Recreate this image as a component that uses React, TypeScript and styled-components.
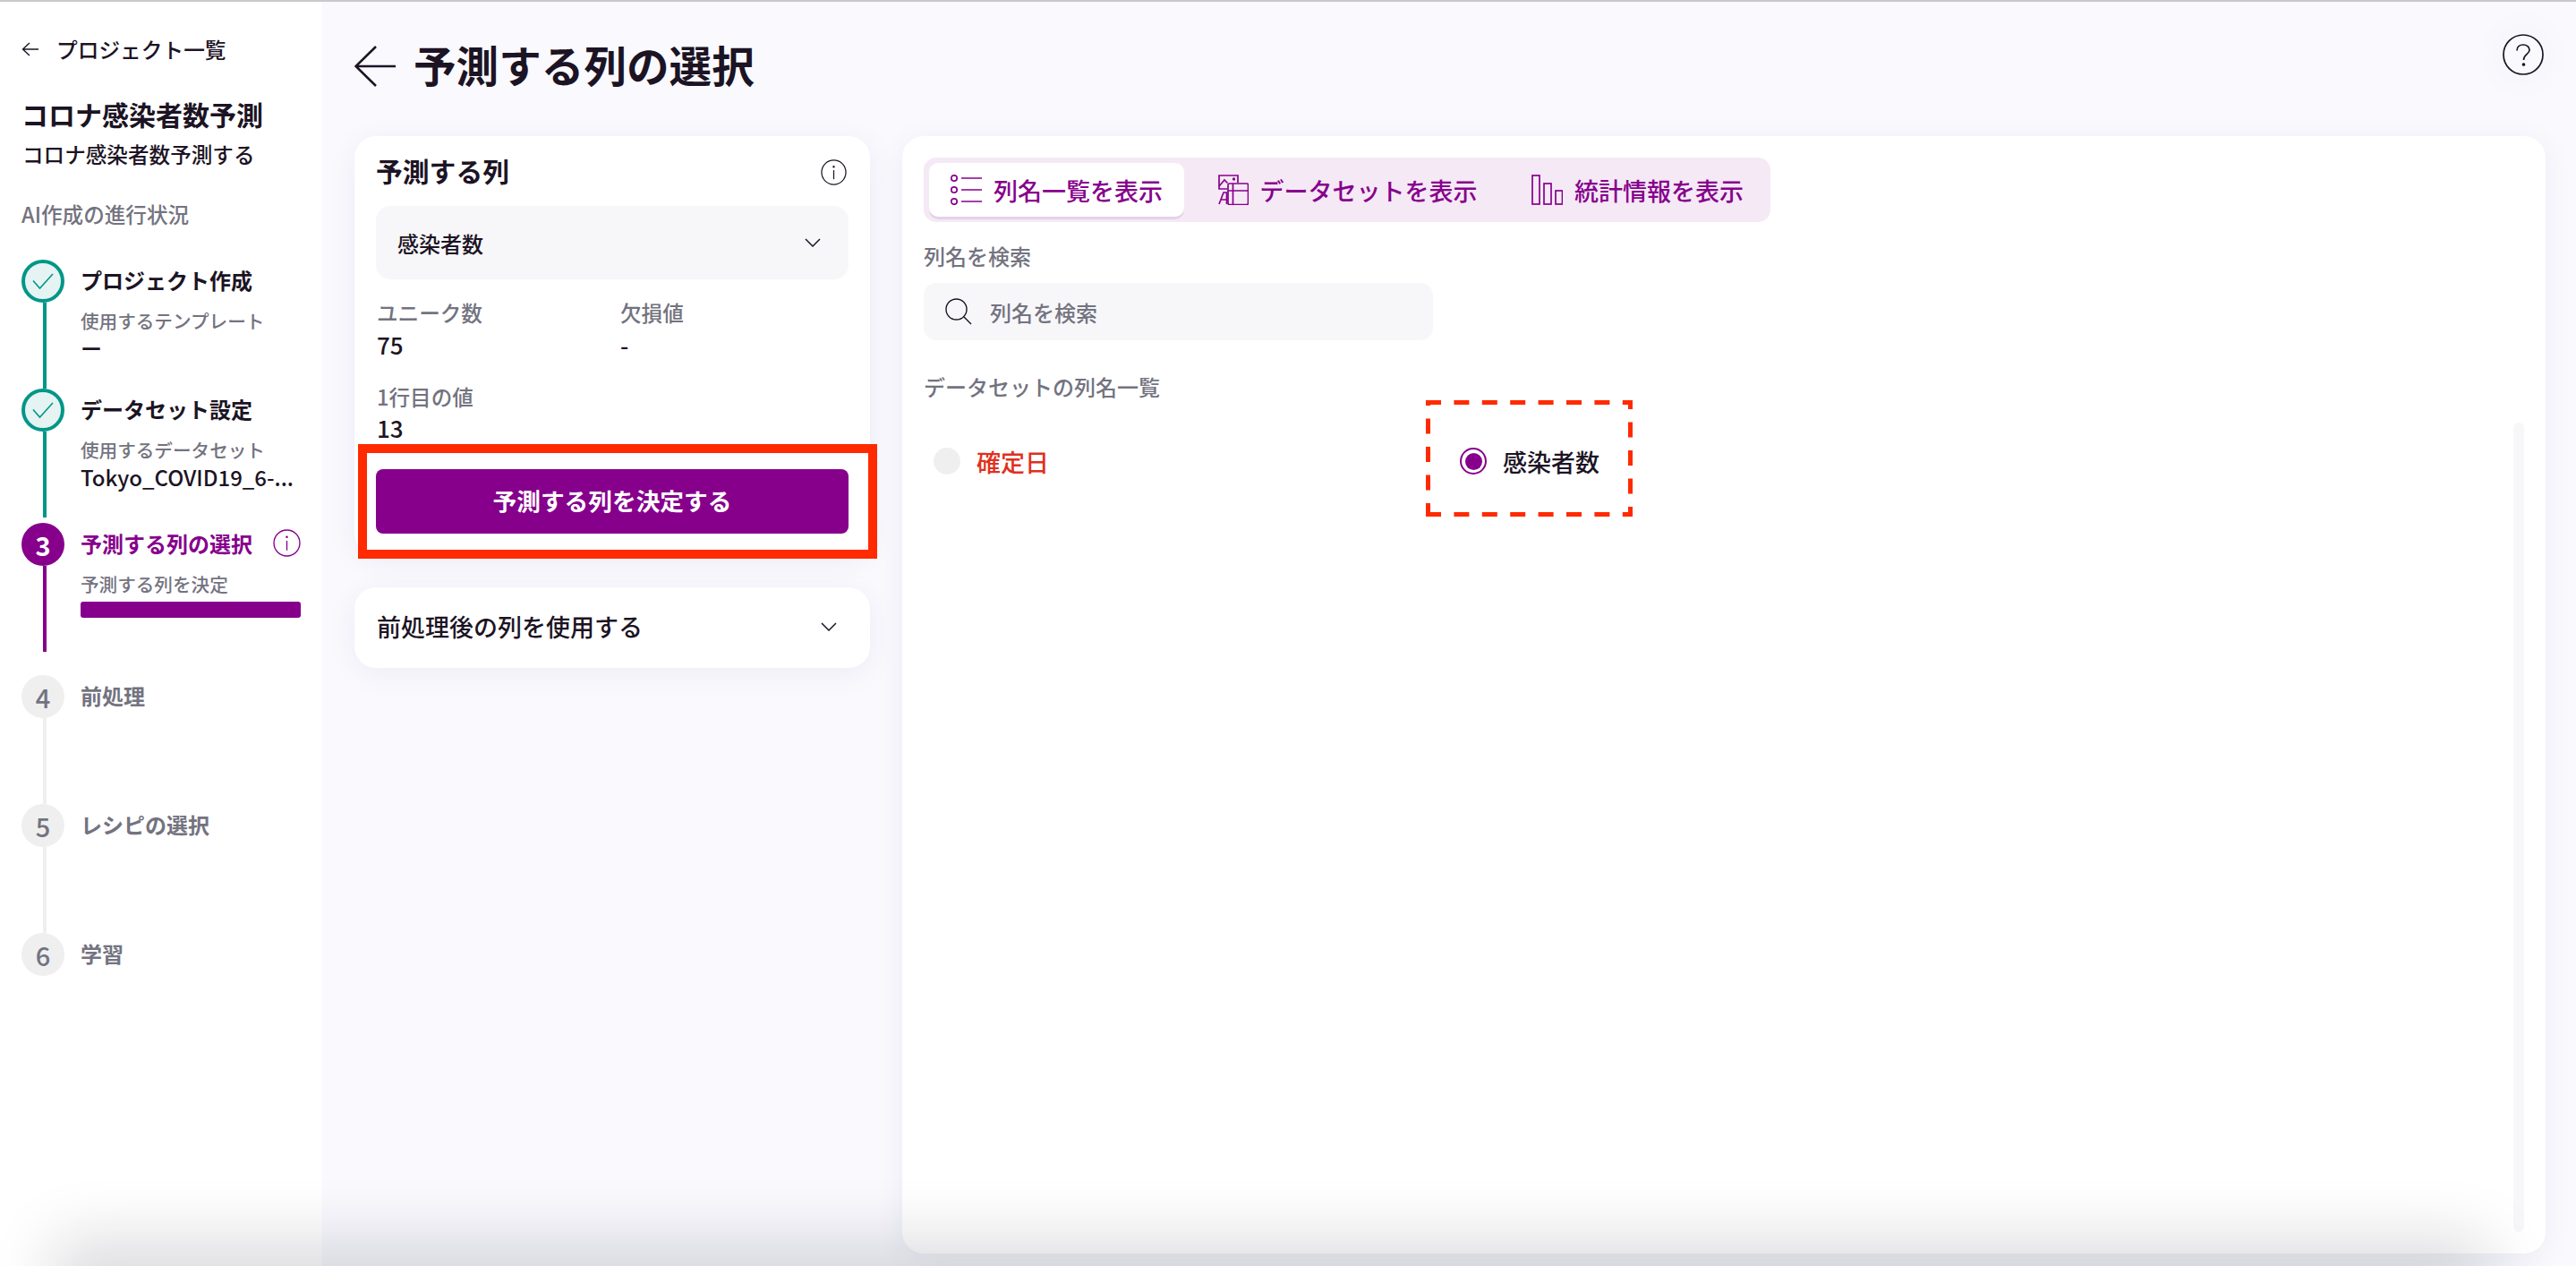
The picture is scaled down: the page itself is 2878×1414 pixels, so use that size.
import React from "react";
import styled, { createGlobalStyle } from "styled-components";

const PURPLE = "#86008c";
const TEAL = "#009688";
const INK = "#1c1424";
const GRAY = "#737380";

const Global = createGlobalStyle`
  html, body { margin: 0; padding: 0; height: 100%; overflow: hidden; }
  body { font-family: "Noto Sans CJK JP", "Noto Sans", sans-serif; color: ${INK}; background: #f9f9fe; }
  * { box-sizing: border-box; }
`;

const Page = styled.div`
  position: relative;
  width: 2878px;
  height: 1414px;
  display: flex;
  border-top: 2px solid #c9c9cd;
  overflow: hidden;
`;
const BottomShade = styled.div`
  position: absolute;
  left: 90px;
  right: 130px;
  bottom: -50px;
  height: 50px;
  box-shadow: 0 0 70px 30px rgba(20, 20, 40, 0.15);
  pointer-events: none;
  z-index: 5;
`;

const Sidebar = styled.aside`
  width: 360px;
  flex: none;
  background: #fff;
  padding: 37px 0 0 24px;
  display: flex;
  flex-direction: column;
`;
const BackRow = styled.div`
  display: flex;
  align-items: center;
  gap: 20px;
  height: 32px;
  margin-bottom: 2px;
  font-size: 23.7px;
  font-weight: 500;
  color: ${INK};
`;
const ProjectTitle = styled.div`
  margin: 34px 0 0;
  font-size: 30px;
  line-height: 40px;
  font-weight: 700;
`;
const ProjectSub = styled.div`
  margin: 9px 0 0 1px;
  font-size: 23.6px;
  line-height: 32px;
  font-weight: 500;
`;
const ProgressHead = styled.div`
  margin-top: 35px;
  font-size: 23.6px;
  line-height: 32px;
  font-weight: 500;
  color: ${GRAY};
`;
const Steps = styled.div`
  margin-top: 35px;
  display: flex;
  flex-direction: column;
`;
const Step = styled.div<{ $after?: number }>`
  display: flex;
  height: 144px;
  margin-bottom: ${(p) => p.$after ?? 0}px;
`;
const Rail = styled.div`
  width: 48px;
  flex: none;
  display: flex;
  flex-direction: column;
`;
type Tone = "done" | "active" | "todo";
const toneColor = (t: Tone) => (t === "done" ? TEAL : t === "active" ? PURPLE : "#efefef");
const Circle = styled.div<{ $tone: Tone }>`
  width: 48px;
  height: 48px;
  flex: none;
  border-radius: 50%;
  display: flex;
  align-items: center;
  justify-content: center;
  font-size: 29px;
  font-weight: ${(p) => (p.$tone === "active" ? 700 : 500)};
  color: ${(p) => (p.$tone === "active" ? "#fff" : GRAY)};
  background: ${(p) => (p.$tone === "done" ? "#e5f3f2" : toneColor(p.$tone))};
  border: ${(p) => (p.$tone === "done" ? `4px solid ${TEAL}` : "none")};
`;
const Connector = styled.div<{ $tone: Tone }>`
  width: 4px;
  flex: 1;
  margin-left: 24px;
  background: ${(p) => toneColor(p.$tone)};
`;
const StepBody = styled.div`
  margin-left: 18px;
  width: 246px;
  display: flex;
  flex-direction: column;
`;
const StepTitleRow = styled.div`
  height: 48px;
  display: flex;
  align-items: center;
  gap: 23px;
  padding-bottom: 3px;
`;
const StepTitle = styled.div<{ $tone: Tone }>`
  font-size: 24px;
  font-weight: 700;
  white-space: nowrap;
  color: ${(p) => (p.$tone === "active" ? PURPLE : p.$tone === "todo" ? GRAY : INK)};
`;
const StepSub = styled.div`
  margin-top: 6px;
  font-size: 20.6px;
  line-height: 28px;
  font-weight: 500;
  color: ${GRAY};
  white-space: nowrap;
`;
const StepValue = styled.div`
  margin-top: 2px;
  font-size: 24px;
  line-height: 30px;
  font-weight: 500;
  white-space: nowrap;
`;
const ProgressBar = styled.div`
  margin-top: 6px;
  height: 18px;
  border-radius: 3px;
  background: ${PURPLE};
`;

const Main = styled.main`
  flex: 1;
  min-width: 0;
  padding: 0 34px 14px 36px;
  display: flex;
  flex-direction: column;
`;
const Header = styled.header`
  height: 150px;
  flex: none;
  padding: 36px 2px 0 0;
  display: flex;
  justify-content: space-between;
  align-items: flex-start;
`;
const TitleRow = styled.div`
  margin-top: 13px;
  height: 46px;
  display: flex;
  align-items: center;
  gap: 20px;
`;
const PageTitle = styled.h1`
  margin: -5px 0 0;
  font-size: 47.6px;
  line-height: 46px;
  font-weight: 700;
`;
const Body = styled.div`
  flex: 1;
  min-height: 0;
  display: flex;
  gap: 36px;
`;
const LeftCol = styled.div`
  width: 576px;
  flex: none;
  display: flex;
  flex-direction: column;
  gap: 36px;
`;
const Card = styled.section`
  position: relative;
  background: #fff;
  border-radius: 24px;
  box-shadow: 0 6px 34px rgba(40, 40, 90, 0.06);
`;
const TargetCard = styled(Card)`
  padding: 20px 24px 24px;
`;
const CardHead = styled.div`
  display: flex;
  align-items: center;
  justify-content: space-between;
  height: 40px;
  padding: 0 2px 0 0;
`;
const CardTitle = styled.h2`
  margin: -4px 0 0;
  font-size: 29.8px;
  font-weight: 700;
`;
const SelectBox = styled.div`
  margin-top: 18px;
  height: 82px;
  border-radius: 16px;
  background: #f7f7fa;
  display: flex;
  align-items: center;
  justify-content: space-between;
  padding: 0 31px 0 24px;
  font-size: 24px;
  font-weight: 500;
`;
const Stats = styled.div`
  margin: 21px 0 0 1px;
  display: grid;
  grid-template-columns: 272px 1fr;
  row-gap: 22px;
`;
const StatLabel = styled.div`
  font-size: 23.6px;
  line-height: 32px;
  font-weight: 500;
  color: ${GRAY};
`;
const StatValue = styled.div<{ $lh?: number }>`
  font-size: 26px;
  line-height: ${(p) => p.$lh ?? 40}px;
  font-weight: 500;
`;
const PrimaryButton = styled.button`
  display: block;
  width: 100%;
  margin-top: 27px;
  height: 72px;
  border: 0;
  border-radius: 8px;
  background: ${PURPLE};
  color: #fff;
  font-family: inherit;
  font-size: 26.7px;
  font-weight: 700;
  padding: 0 0 3px;
`;
const RedFrame = styled.div`
  position: absolute;
  left: 4px;
  top: 344px;
  width: 580px;
  height: 128px;
  border: 10px solid #ff2a00;
  pointer-events: none;
`;
const AccordionCard = styled(Card)`
  height: 90px;
  display: flex;
  align-items: center;
  justify-content: space-between;
  padding: 0 37px 3px 25px;
  font-size: 27px;
  font-weight: 500;
`;
const Panel = styled(Card)`
  flex: 1;
  min-width: 0;
  padding: 24px;
`;
const Tabs = styled.div`
  display: inline-flex;
  gap: 12.5px;
  padding: 6px;
  height: 72px;
  border-radius: 14px;
  background: #f5e9f6;
`;
const Tab = styled.div<{ $active?: boolean }>`
  height: 60px;
  display: flex;
  align-items: center;
  gap: 13px;
  padding: 0 24px;
  border-radius: 10px;
  font-size: 27px;
  font-weight: 500;
  color: ${PURPLE};
  background: ${(p) => (p.$active ? "#fff" : "transparent")};
  box-shadow: ${(p) => (p.$active ? "0 3px 0 #e6d2ea" : "none")};
`;
const FieldLabel = styled.div<{ $top: number }>`
  margin-top: ${(p) => p.$top}px;
  font-size: 24px;
  line-height: 32px;
  font-weight: 500;
  color: ${GRAY};
`;
const SearchBox = styled.div`
  margin-top: 14px;
  width: 569px;
  height: 64px;
  border-radius: 14px;
  background: #f7f7fa;
  display: flex;
  align-items: center;
  gap: 20px;
  padding: 0 24px;
  font-size: 24px;
  font-weight: 500;
  color: ${GRAY};
`;
const RadioGrid = styled.div`
  margin-top: 35px;
  display: grid;
  grid-template-columns: 588px 588px;
`;
const RadioItem = styled.div`
  position: relative;
  height: 64px;
  padding-left: 11px;
  display: flex;
  align-items: center;
  gap: 18px;
`;
const RadioMark = styled.span<{ $checked?: boolean }>`
  width: 30px;
  height: 30px;
  border-radius: 50%;
  display: flex;
  align-items: center;
  justify-content: center;
  background: ${(p) => (p.$checked ? "#fff" : "#efefef")};
  border: ${(p) => (p.$checked ? `2px solid ${PURPLE}` : "none")};
  &::after {
    content: "";
    display: ${(p) => (p.$checked ? "block" : "none")};
    width: 19px;
    height: 19px;
    border-radius: 50%;
    background: ${PURPLE};
  }
`;
const RadioText = styled.span<{ $error?: boolean }>`
  font-size: 27px;
  font-weight: 500;
  color: ${(p) => (p.$error ? "#e0301e" : INK)};
`;
const DashFrame = styled.svg`
  position: absolute;
  left: -27px;
  top: -36px;
  pointer-events: none;
`;
const ScrollTrack = styled.div`
  position: absolute;
  right: 24px;
  top: 320px;
  bottom: 24px;
  width: 12px;
  border-radius: 6px;
  background: #f7f7fa;
`;
const HelpButton = styled.div`
  width: 46px;
  height: 46px;
  border-radius: 50%;
  box-shadow: 0 0 24px 14px rgba(120, 110, 150, 0.025);
`;

const Arrow = ({ w, h, sw }: { w: number; h: number; sw: number }) => (
  <svg width={w} height={h} viewBox={`0 0 ${w} ${h}`} fill="none" stroke={INK} strokeWidth={sw}>
    <path d={`M${w} ${h / 2}H1.5M${h / 2 + 1} 1L1.5 ${h / 2}L${h / 2 + 1} ${h - 1}`} />
  </svg>
);
const Check = () => (
  <svg width="24" height="20" viewBox="0 0 24 20" fill="none" stroke={TEAL} strokeWidth="1.6">
    <path d="M1 9.5L8.5 18L23 2" />
  </svg>
);
const Info = ({ size, color }: { size: number; color: string }) => (
  <svg width={size} height={size} viewBox="0 0 30 30" fill="none" stroke={color} strokeWidth="1.3">
    <circle cx="15" cy="15" r="14" />
    <path d="M15 12.5V23" />
    <circle cx="15" cy="8.5" r="0.6" fill={color} />
  </svg>
);
const Chevron = () => (
  <svg width="18" height="10" viewBox="0 0 18 10" fill="none" stroke={INK} strokeWidth="1.5">
    <path d="M1 1L9 9L17 1" />
  </svg>
);
const ListIcon = () => (
  <svg width="35" height="34" viewBox="0 0 35 34" fill="none" stroke={PURPLE} strokeWidth="1.7">
    <circle cx="4" cy="4" r="3.2" />
    <circle cx="4" cy="17" r="3.2" />
    <circle cx="4" cy="30" r="3.2" />
    <path d="M12 4H35M12 17H35M12 30H35" />
  </svg>
);
const DataIcon = () => (
  <svg width="35" height="34" viewBox="0 0 35 34" fill="none" stroke={PURPLE} strokeWidth="1.7">
    <path d="M11 16H2V1H23V9" />
    <path d="M2 13L8 6L11.5 9.5" />
    <circle cx="18.5" cy="5" r="0.8" fill={PURPLE} />
    <path d="M2 33L7 20H10.5V33M3.5 28H10.5" />
    <rect x="12" y="10" width="22.5" height="23.5" rx="1.5" />
    <path d="M12 18H34.5M17.5 10V33.5" />
  </svg>
);
const BarsIcon = () => (
  <svg width="35" height="34" viewBox="0 0 35 34" fill="none" stroke={PURPLE} strokeWidth="1.7">
    <rect x="1" y="1" width="8" height="32" />
    <rect x="14" y="10" width="8" height="23" />
    <rect x="27" y="18" width="7.5" height="15" />
  </svg>
);
const SearchIcon = () => (
  <svg width="30" height="30" viewBox="0 0 30 30" fill="none" stroke={INK} strokeWidth="1.4">
    <circle cx="12.5" cy="12.5" r="11.5" />
    <path d="M21 21L29 29" />
  </svg>
);
const HelpIcon = () => (
  <svg width="46" height="46" viewBox="0 0 46 46" fill="none" stroke={INK} strokeWidth="1.7">
    <circle cx="23" cy="23" r="22" />
    <path d="M16 18.5C16 14.5 19 12 23 12C27 12 30 14.5 30 18C30 22.5 23.5 22.5 23.5 29" />
    <circle cx="23.5" cy="34" r="1" fill={INK} />
  </svg>
);
const DashedRect = () => (
  <DashFrame width="231" height="130" viewBox="0 0 231 130" fill="none" stroke="#ff2a00" strokeWidth="5">
    <path d="M0 2.5H231M0 127.5H231" strokeDasharray="17 14.4" />
    <path d="M2.5 0V130" strokeDasharray="17 14.5" strokeDashoffset="11" />
    <path d="M228.5 0V130" strokeDasharray="17 14.5" strokeDashoffset="7" />
  </DashFrame>
);

export default function App() {
  return (
    <>
      <Global />
      <Page>
        <Sidebar>
          <BackRow>
            <Arrow w={19} h={16} sw={1.4} />
            プロジェクト一覧
          </BackRow>
          <ProjectTitle>コロナ感染者数予測</ProjectTitle>
          <ProjectSub>コロナ感染者数予測する</ProjectSub>
          <ProgressHead>AI作成の進行状況</ProgressHead>
          <Steps>
            <Step>
              <Rail>
                <Circle $tone="done"><Check /></Circle>
                <Connector $tone="done" />
              </Rail>
              <StepBody>
                <StepTitleRow><StepTitle $tone="done">プロジェクト作成</StepTitle></StepTitleRow>
                <StepSub>使用するテンプレート</StepSub>
                <StepValue>ー</StepValue>
              </StepBody>
            </Step>
            <Step $after={6}>
              <Rail>
                <Circle $tone="done"><Check /></Circle>
                <Connector $tone="done" />
              </Rail>
              <StepBody>
                <StepTitleRow><StepTitle $tone="done">データセット設定</StepTitle></StepTitleRow>
                <StepSub>使用するデータセット</StepSub>
                <StepValue>Tokyo_COVID19_6-...</StepValue>
              </StepBody>
            </Step>
            <Step $after={26}>
              <Rail>
                <Circle $tone="active">3</Circle>
                <Connector $tone="active" />
              </Rail>
              <StepBody>
                <StepTitleRow>
                  <StepTitle $tone="active">予測する列の選択</StepTitle>
                  <Info size={31} color={PURPLE} />
                </StepTitleRow>
                <StepSub>予測する列を決定</StepSub>
                <ProgressBar />
              </StepBody>
            </Step>
            <Step>
              <Rail>
                <Circle $tone="todo">4</Circle>
                <Connector $tone="todo" />
              </Rail>
              <StepBody>
                <StepTitleRow><StepTitle $tone="todo">前処理</StepTitle></StepTitleRow>
              </StepBody>
            </Step>
            <Step>
              <Rail>
                <Circle $tone="todo">5</Circle>
                <Connector $tone="todo" />
              </Rail>
              <StepBody>
                <StepTitleRow><StepTitle $tone="todo">レシピの選択</StepTitle></StepTitleRow>
              </StepBody>
            </Step>
            <Step>
              <Rail>
                <Circle $tone="todo">6</Circle>
              </Rail>
              <StepBody>
                <StepTitleRow><StepTitle $tone="todo">学習</StepTitle></StepTitleRow>
              </StepBody>
            </Step>
          </Steps>
        </Sidebar>
        <Main>
          <Header>
            <TitleRow>
              <Arrow w={46} h={46} sw={2.6} />
              <PageTitle>予測する列の選択</PageTitle>
            </TitleRow>
            <HelpButton><HelpIcon /></HelpButton>
          </Header>
          <Body>
            <LeftCol>
              <TargetCard>
                <CardHead>
                  <CardTitle>予測する列</CardTitle>
                  <Info size={29} color={INK} />
                </CardHead>
                <SelectBox>
                  感染者数
                  <Chevron />
                </SelectBox>
                <Stats>
                  <div>
                    <StatLabel>ユニーク数</StatLabel>
                    <StatValue>75</StatValue>
                  </div>
                  <div>
                    <StatLabel>欠損値</StatLabel>
                    <StatValue>-</StatValue>
                  </div>
                  <div>
                    <StatLabel>1行目の値</StatLabel>
                    <StatValue $lh={38}>13</StatValue>
                  </div>
                </Stats>
                <PrimaryButton>予測する列を決定する</PrimaryButton>
                <RedFrame />
              </TargetCard>
              <AccordionCard>
                前処理後の列を使用する
                <Chevron />
              </AccordionCard>
            </LeftCol>
            <Panel>
              <Tabs>
                <Tab $active><ListIcon />列名一覧を表示</Tab>
                <Tab><DataIcon />データセットを表示</Tab>
                <Tab><BarsIcon />統計情報を表示</Tab>
              </Tabs>
              <FieldLabel $top={22}>列名を検索</FieldLabel>
              <SearchBox>
                <SearchIcon />
                列名を検索
              </SearchBox>
              <FieldLabel $top={36}>データセットの列名一覧</FieldLabel>
              <RadioGrid>
                <RadioItem>
                  <RadioMark />
                  <RadioText $error>確定日</RadioText>
                </RadioItem>
                <RadioItem>
                  <RadioMark $checked />
                  <RadioText>感染者数</RadioText>
                  <DashedRect />
                </RadioItem>
              </RadioGrid>
              <ScrollTrack />
            </Panel>
          </Body>
        </Main>
        <BottomShade />
      </Page>
    </>
  );
}
